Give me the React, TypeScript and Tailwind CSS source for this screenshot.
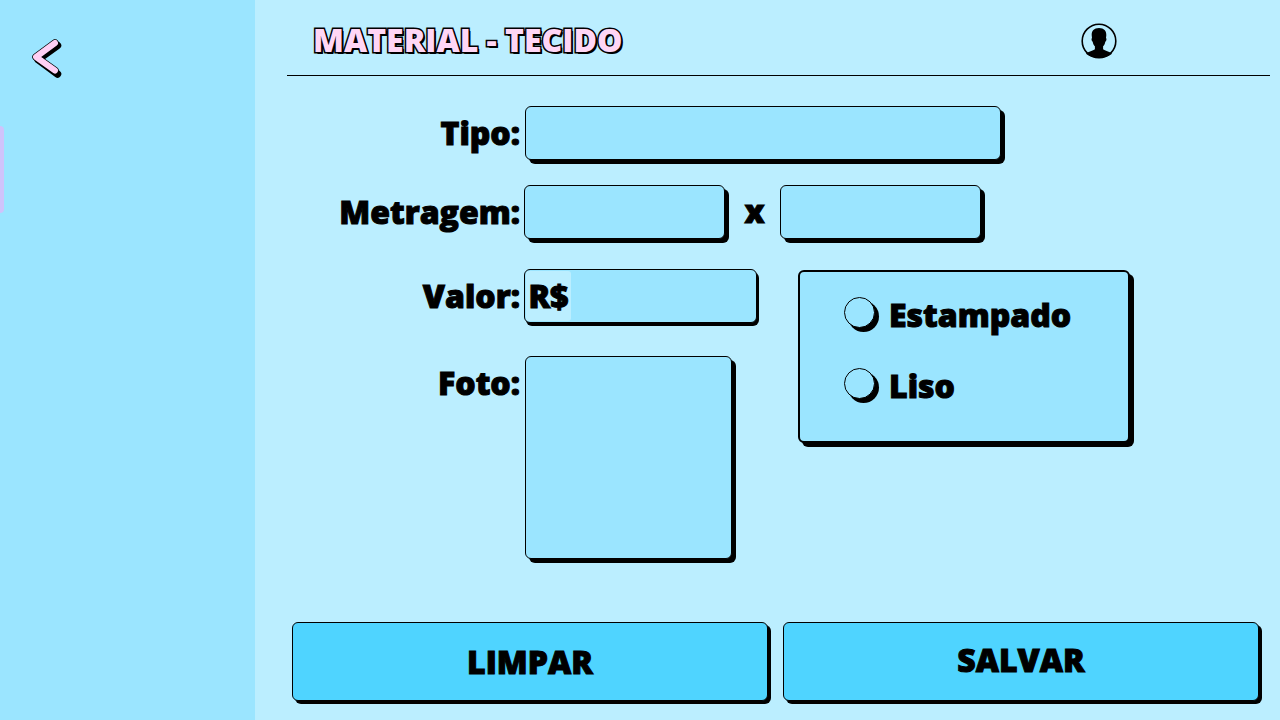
import type { ReactNode } from "react";

const box = "block min-w-0 rounded-[6px] border border-black bg-[#9be5ff] outline-none";
const shadow = "shadow-[4px_4px_0_#000]";
const text = "text-[32px] leading-[40px] font-extrabold [-webkit-text-stroke:1px_#000] [stroke-linejoin:round]";

function FieldLabel({ htmlFor, children }: { htmlFor: string; children: ReactNode }) {
  return (
    <label htmlFor={htmlFor} className={`${text} w-[233px] shrink-0 pt-[7px] text-right whitespace-nowrap`}>
      {children}
    </label>
  );
}

function Option({ id, children }: { id: string; children: ReactNode }) {
  return (
    <div className="flex items-start gap-[14px]">
      <input
        type="radio"
        id={id}
        name="estampa"
        className="mt-[6px] size-[31px] shrink-0 appearance-none rounded-full border border-black bg-[#9be5ff] shadow-[4px_4px_0_#000] checked:bg-[#ffd6f5]"
      />
      <label htmlFor={id} className={`${text} pt-1`}>
        {children}
      </label>
    </div>
  );
}

export default function App() {
  return (
    <div className="flex min-h-screen bg-[#bbeeff] font-['Open_Sans','Noto_Sans',sans-serif] text-black">
      <aside className="w-[255px] shrink-0 bg-[#9be5ff]">
        <button type="button" aria-label="Voltar" className="mt-9 ml-7 block">
          <svg width="38" height="44" viewBox="0 0 38 44" fill="none" strokeLinecap="round" strokeLinejoin="round">
            <path d="M29.500 9.500L10 23.500L29.500 38" stroke="#000" strokeWidth="7.500" />
            <path d="M27 7L8 21L27 34.500" stroke="#000" strokeWidth="7.500" />
            <path d="M27 7L8 21L27 34.500" stroke="#ffd0f4" strokeWidth="6" />
          </svg>
        </button>
        <div className="mt-[46px] h-[87px] w-1 rounded-r-[4px] bg-[#cfc3fb]" />
      </aside>

      <main className="flex min-w-0 flex-1 flex-col">
        <header className="mr-[10px] ml-8 flex h-[76px] items-start justify-between border-b border-black pt-5 pr-[153px] pl-[26px]">
          <h1 className="text-[32px] leading-[40px] font-extrabold whitespace-nowrap text-[#ffd6f5] [-webkit-text-stroke:3px_#000] [paint-order:stroke_fill] [stroke-linejoin:round] [text-shadow:1px_1px_0_#000,2px_2px_0_#000]">
            MATERIAL - TECIDO
          </h1>
          <button type="button" aria-label="Perfil" className="mt-[3px]">
            <svg width="36" height="36" viewBox="0 0 36 36">
              <circle cx="18" cy="18" r="16.800" fill="none" stroke="#000" strokeWidth="1.600" />
              <path d="M18 5c-5 0-7.500 2.900-7.300 7.200l.3 2.800c-.9.300-.5 3.200.7 3.800.4 2 1.100 3.500 2.200 4.500v3c-1.800 1.500-6.400 2.200-9 4.500C8.500 33.500 12.900 35 18 35s9.500-1.500 13.100-4.200c-2.600-2.300-7.200-3-9-4.500v-3c1.100-1 1.800-2.500 2.200-4.500 1.200-.6 1.600-3.500.7-3.800l.3-2.800c.2-4.300-2.300-7.200-7.300-7.200z" />
            </svg>
          </button>
        </header>

        <form className="flex flex-1 flex-col justify-between">
          <div className="flex flex-col gap-[25px] pt-[30px] pr-[20px] pl-8">
            <div className="flex gap-[5px]">
              <FieldLabel htmlFor="tipo">Tipo:</FieldLabel>
              <input id="tipo" className={`${box} ${shadow} ${text} h-[54px] w-full max-w-[476px] px-3`} />
            </div>
            <div className="flex gap-1">
              <FieldLabel htmlFor="metragem">Metragem:</FieldLabel>
              <input id="metragem" className={`${box} ${shadow} ${text} h-[54px] w-[201px] px-3`} />
              <span className={`${text} w-[47px] pt-[6px] pl-1 text-center`}>x</span>
              <input
                aria-label="Metragem, segunda medida"
                className={`${box} ${shadow} ${text} h-[54px] w-[201px] px-3`}
              />
            </div>
            <div className="flex items-start gap-[41px] pt-[5px]">
              <div className="flex flex-col gap-[33px]">
                <div className="flex gap-1">
                  <FieldLabel htmlFor="valor">Valor:</FieldLabel>
                  <div className={`${box} flex h-[54px] w-[233px] p-px shadow-[2px_3px_0_#000]`}>
                    <span className={`${text} w-[45px] rounded-[3px] bg-[#bbeeff] pt-[5px] text-center`}>R$</span>
                    <input id="valor" className={`${text} min-w-0 flex-1 bg-transparent px-1 outline-none`} />
                  </div>
                </div>
                <div className="flex gap-[5px]">
                  <FieldLabel htmlFor="foto">Foto:</FieldLabel>
                  <input
                    id="foto"
                    type="file"
                    accept="image/*"
                    className={`${box} ${shadow} h-[203px] w-[207px] text-transparent file:hidden`}
                  />
                </div>
              </div>
              <div
                role="radiogroup"
                aria-label="Estampa"
                className={`${shadow} mt-px flex h-[173px] w-[332px] flex-col gap-[27px] rounded-[6px] border-2 border-black bg-[#9be5ff] pt-[19px] pl-[44px]`}
              >
                <Option id="estampado">Estampado</Option>
                <Option id="liso">Liso</Option>
              </div>
            </div>
          </div>

          <div className="flex gap-[15px] pt-6 pr-[21px] pb-[19px] pl-[37px]">
            <button
              type="reset"
              className={`${text} h-[79px] flex-1 rounded-[6px] border border-black bg-[#4fd4ff] shadow-[3px_3px_0_#000]`}
            >
              LIMPAR
            </button>
            <button
              type="submit"
              className={`${text} h-[79px] flex-1 rounded-[6px] border border-black bg-[#4fd4ff] pb-1 shadow-[3px_3px_0_#000]`}
            >
              SALVAR
            </button>
          </div>
        </form>
      </main>
    </div>
  );
}
